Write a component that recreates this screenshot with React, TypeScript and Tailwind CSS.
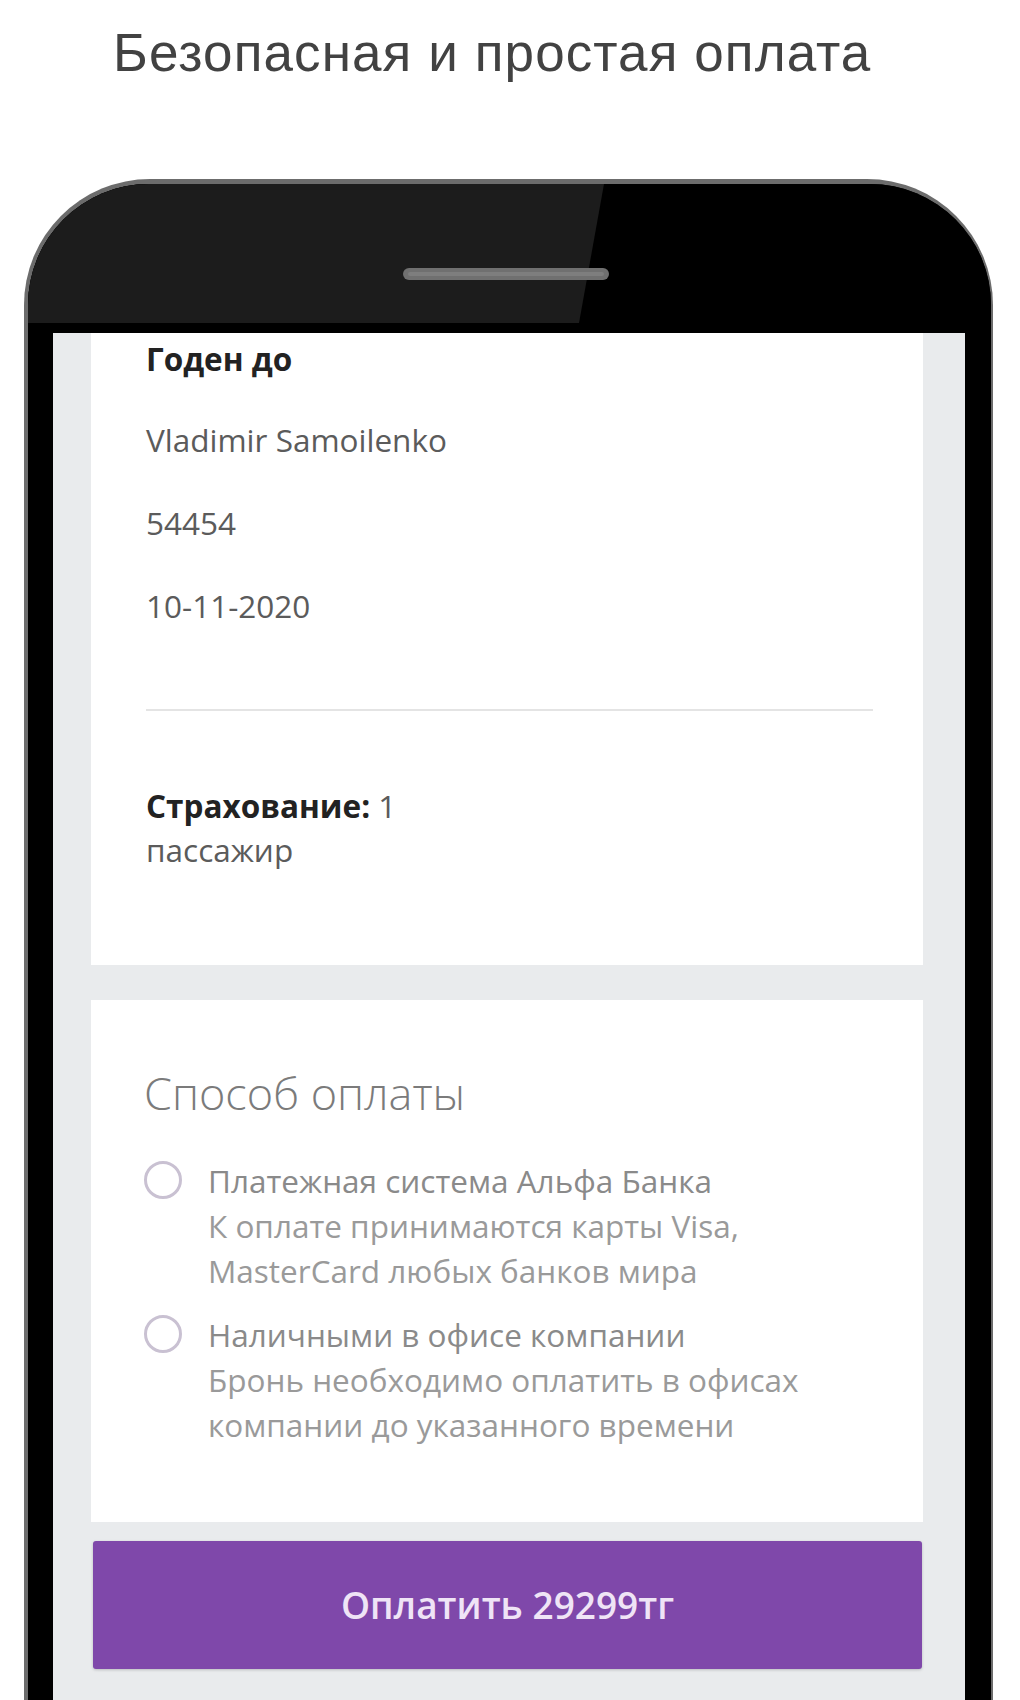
import React from "react";

function Radio() {
  return (
    <div className="mt-[3px] h-[38px] w-[38px] shrink-0 rounded-full border-[3px] border-[#c9c1d2] bg-white" />
  );
}

export default function App() {
  return (
    <div className="h-[1700px] w-[1020px] overflow-hidden bg-white">
      <div className="flex h-[104px] items-center pl-[113px]">
        <h1 className="font-['Liberation_Sans',Arial,sans-serif] text-[53px] leading-none font-normal tracking-[1.1px] text-[#424242]">
          Безопасная и простая оплата
        </h1>
      </div>

      <div className="ml-[24px] mt-[75px] w-[969px] rounded-t-[126px] bg-[#6c6c6c] pl-[4px] pr-[2px] pt-[5px]">
        <div className="overflow-hidden rounded-t-[121px] bg-black">
          <div className="h-[149px]">
            <svg className="block h-full w-full" viewBox="0 0 963 149" preserveAspectRatio="none">
              <rect x="0" y="0" width="963" height="149" fill="#000" />
              <polygon points="0,0 576,0 551,139 0,139" fill="#1c1c1c" />
              <rect x="375" y="84" width="206" height="12" rx="6" fill="#707070" />
              <rect x="380" y="88" width="196" height="4" rx="2" fill="#7e7e7e" />
            </svg>
          </div>
          <div className="pl-[25px] pr-[26px]">
            <div className="h-[1400px] bg-[#e9ebed] font-['Open_Sans',sans-serif]">
              <div className="ml-[38px] mr-[42px] bg-white pb-[93px] pl-[55px] pr-[50px] pt-[6px]">
                <div className="text-[31.5px] font-bold leading-[40px] text-[#222]">Годен до</div>
                <div className="mt-[41px] text-[31.5px] leading-[40px] text-[#5b5b5b]">Vladimir Samoilenko</div>
                <div className="mt-[43px] text-[31.5px] leading-[40px] text-[#5b5b5b]">54454</div>
                <div className="mt-[43px] text-[31.5px] leading-[40px] text-[#5b5b5b]">10-11-2020</div>
                <div className="mt-[83px] h-[2px] bg-[#e4e4e4]" />
                <div className="mt-[73px] text-[31.5px] leading-[44px] text-[#5b5b5b]">
                  <span className="font-bold text-[#222]">Страхование:</span> 1
                  <br />
                  пассажир
                </div>
              </div>

              <div className="ml-[38px] mr-[42px] mt-[35px] bg-white pb-[75px] pl-[53px] pr-[30px] pt-[65px]">
                <div className="text-[45px] font-light leading-[56px] text-[#7b7b7b]">Способ оплаты</div>
                <div className="mt-[37px] flex flex-col gap-[19px]">
                  <div className="flex items-start gap-[26px]">
                    <Radio />
                    <div className="text-[31.5px] leading-[45px]">
                      <div className="text-[#8a8a8a]">Платежная система Альфа Банка</div>
                      <div className="text-[#9a9a9a]">
                        К оплате принимаются карты Visa,
                        <br />
                        MasterCard любых банков мира
                      </div>
                    </div>
                  </div>
                  <div className="flex items-start gap-[26px]">
                    <Radio />
                    <div className="text-[31.5px] leading-[45px]">
                      <div className="text-[#8a8a8a]">Наличными в офисе компании</div>
                      <div className="text-[#9a9a9a]">
                        Бронь необходимо оплатить в офисах
                        <br />
                        компании до указанного времени
                      </div>
                    </div>
                  </div>
                </div>
              </div>

              <div className="ml-[40px] mr-[43px] mt-[19px] flex h-[128px] items-center justify-center rounded-[3px] bg-[#7f48aa] text-[37px] font-semibold text-[#efe4f6] shadow-[0_1px_3px_rgba(0,0,0,0.2)]">
                Оплатить 29299тг
              </div>
            </div>
          </div>
        </div>
      </div>
    </div>
  );
}
